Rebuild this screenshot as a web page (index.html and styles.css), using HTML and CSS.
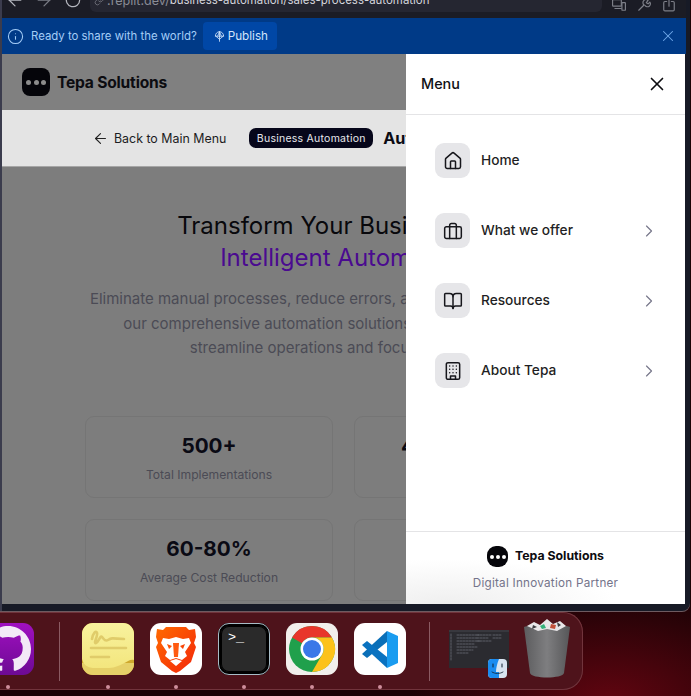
FILE: index.html
```html
<!DOCTYPE html>
<html lang="en">
<head>
  <meta charset="UTF-8" />
  <meta name="viewport" content="width=device-width, initial-scale=1.0"/>
  <title>Tepa Solutions - Sales Process Automation</title>
  <link rel="stylesheet" href="styles.css">
</head>
<body>
  <div class="window">
    <div class="toolbar">
      <div class="nav-btns">
        <svg class="tool-icon" viewBox="0 0 24 24"><path d="m12 19-7-7 7-7"/><path d="M19 12H5"/></svg>
        <svg class="tool-icon faded" viewBox="0 0 24 24"><path d="m12 5 7 7-7 7"/><path d="M5 12h14"/></svg>
        <svg class="tool-icon" viewBox="0 0 24 24"><path d="M20 12a8 8 0 1 1-3-6.2"/><path d="M20 3v5h-5"/></svg>
      </div>
      <div class="url-bar">
        <svg class="url-lock" viewBox="0 0 24 24"><path d="M10 13a5 5 0 0 0 7.500.500l3-3a5 5 0 0 0-7-7l-1.700 1.700"/><path d="M14 11a5 5 0 0 0-7.500-.500l-3 3a5 5 0 0 0 7 7l1.700-1.700"/></svg>
        <span class="url-host">.replit.dev/</span><span class="url-path">business-automation/sales-process-automation</span>
      </div>
      <div class="tool-right">
        <svg class="tool-icon" viewBox="0 0 24 24"><rect x="1" y="3" width="15" height="11" rx="1"/><path d="M5 18h11"/><rect x="17" y="8" width="6" height="13" rx="1"/></svg>
        <svg class="tool-icon" viewBox="0 0 24 24"><path d="M3 21l9-9"/><path d="M12 12a5 5 0 0 1 7-8l-3 4 3 2 3-3a5 5 0 0 1-8 6"/></svg>
        <svg class="tool-icon" viewBox="0 0 24 24"><path d="M8 6H5a2 2 0 0 0-2 2v12a2 2 0 0 0 2 2h14a2 2 0 0 0 2-2V8a2 2 0 0 0-2-2h-3"/><path d="M12 14V2"/></svg>
      </div>
    </div>

    <div class="banner">
      <svg class="banner-info" viewBox="0 0 24 24"><circle cx="12" cy="12" r="10"/><path d="M12 16v-4"/><path d="M12 8h.01"/></svg>
      <span class="banner-text">Ready to share with the world?</span>
      <button class="publish-btn">
        <svg class="publish-icon" viewBox="0 0 16 16"><path d="M2 7a6 6 0 0 1 12 0z"/><path d="M5.500 7 8 1l2.500 6"/><path d="M2 7l6 5 6-5"/><path d="M8 1v14"/></svg>
        Publish
      </button>
      <svg class="banner-close" viewBox="0 0 24 24"><path d="M18 6 6 18"/><path d="m6 6 12 12"/></svg>
    </div>

    <div class="page">
      <header class="site-header">
        <div class="logo"><i></i><i></i><i></i></div>
        <span class="brand">Tepa Solutions</span>
      </header>

      <div class="subnav">
        <svg class="back-icon" viewBox="0 0 24 24"><path d="m12 19-7-7 7-7"/><path d="M19 12H5"/></svg>
        <span class="back-text">Back to Main Menu</span>
        <span class="badge">Business Automation</span>
        <span class="subnav-title">Automation</span>
      </div>

      <main class="hero">
        <h1>Transform Your Business into<br><span class="accent">Intelligent Automation</span></h1>
        <p>Eliminate manual processes, reduce errors, and accelerate growth, with<br>our comprehensive automation solutions designed to help you<br>streamline operations and focus on growth.</p>
        <div class="stats">
          <div class="stat"><strong>500+</strong><span>Total Implementations</span></div>
          <div class="stat"><strong>400-600% ROI</strong><span>Average Return</span></div>
          <div class="stat"><strong>60-80%</strong><span>Average Cost Reduction</span></div>
          <div class="stat"><strong>24/7</strong><span>Process Monitoring</span></div>
        </div>
      </main>

      <aside class="drawer">
        <div class="drawer-head">
          <span class="drawer-title">Menu</span>
          <svg class="drawer-close" viewBox="0 0 24 24"><path d="M18 6 6 18"/><path d="m6 6 12 12"/></svg>
        </div>
        <nav class="drawer-nav">
          <a class="nav-item">
            <span class="nav-icon"><svg viewBox="0 0 24 24"><path d="M15 21v-8a1 1 0 0 0-1-1h-4a1 1 0 0 0-1 1v8"/><path d="M3 10a2 2 0 0 1 .709-1.528l7-5.999a2 2 0 0 1 2.582 0l7 5.999A2 2 0 0 1 21 10v9a2 2 0 0 1-2 2H5a2 2 0 0 1-2-2z"/></svg></span>
            <span class="nav-label">Home</span>
          </a>
          <a class="nav-item">
            <span class="nav-icon"><svg viewBox="0 0 24 24"><path d="M16 21V5a2 2 0 0 0-2-2h-4a2 2 0 0 0-2 2v16"/><rect x="2" y="7" width="20" height="14" rx="2"/></svg></span>
            <span class="nav-label">What we offer</span>
            <svg class="chevron" viewBox="0 0 24 24"><path d="m9 18 6-6-6-6"/></svg>
          </a>
          <a class="nav-item">
            <span class="nav-icon"><svg viewBox="0 0 24 24"><path d="M12 7v14"/><path d="M3 18a1 1 0 0 1-1-1V4a1 1 0 0 1 1-1h5a4 4 0 0 1 4 4 4 4 0 0 1 4-4h5a1 1 0 0 1 1 1v13a1 1 0 0 1-1 1h-6a3 3 0 0 0-3 3 3 3 0 0 0-3-3z"/></svg></span>
            <span class="nav-label">Resources</span>
            <svg class="chevron" viewBox="0 0 24 24"><path d="m9 18 6-6-6-6"/></svg>
          </a>
          <a class="nav-item">
            <span class="nav-icon"><svg viewBox="0 0 24 24"><rect x="4" y="2" width="16" height="20" rx="2"/><path d="M9 22v-4h6v4"/><path d="M8 6h.01M12 6h.01M16 6h.01M8 10h.01M12 10h.01M16 10h.01M8 14h.01M12 14h.01M16 14h.01"/></svg></span>
            <span class="nav-label">About Tepa</span>
            <svg class="chevron" viewBox="0 0 24 24"><path d="m9 18 6-6-6-6"/></svg>
          </a>
        </nav>
        <div class="drawer-foot">
          <div class="foot-brand">
            <div class="logo small"><i></i><i></i><i></i></div>
            <span class="foot-name">Tepa Solutions</span>
          </div>
          <div class="foot-sub">Digital Innovation Partner</div>
        </div>
      </aside>
    </div>
  </div>

  <div class="dock">
    <div class="dock-item">
      <svg class="app" viewBox="0 0 52 52">
        <defs><linearGradient id="gh" x1="0" y1="0" x2="0" y2="1"><stop offset="0" stop-color="#a010c0"/><stop offset="1" stop-color="#6d0a94"/></linearGradient></defs>
        <rect width="52" height="52" rx="11" fill="url(#gh)"/>
        <path transform="translate(3 3) scale(2.875)" fill="#f3e9f7" d="M8 0C3.580 0 0 3.580 0 8c0 3.540 2.290 6.530 5.470 7.590.4.070.550-.170.550-.380 0-.190-.010-.820-.010-1.490-2.010.370-2.530-.490-2.690-.940-.090-.230-.480-.940-.820-1.130-.280-.150-.680-.520-.010-.530.630-.010 1.080.580 1.230.820.720 1.210 1.870.870 2.330.660.070-.520.280-.870.510-1.070-1.780-.200-3.640-.890-3.640-3.950 0-.870.310-1.590.820-2.150-.080-.200-.360-1.020.080-2.120 0 0 .670-.210 2.200.820.640-.180 1.320-.270 2-.270.680 0 1.360.090 2 .270 1.530-1.040 2.200-.820 2.200-.820.440 1.100.160 1.920.080 2.120.510.560.820 1.270.820 2.150 0 3.070-1.870 3.750-3.650 3.950.290.250.540.730.540 1.480 0 1.070-.010 1.930-.010 2.200 0 .210.150.460.550.380A8.013 8.013 0 0 0 16 8c0-4.420-3.580-8-8-8z"/>
      </svg>
      <span class="dot"></span>
    </div>
    <span class="dock-sep first"></span>
    <div class="dock-item">
      <svg class="app" viewBox="0 0 52 52">
        <defs><linearGradient id="note" x1="0" y1="0" x2="0" y2="1"><stop offset="0" stop-color="#f8f29e"/><stop offset="1" stop-color="#f3e67e"/></linearGradient></defs>
        <rect width="52" height="52" rx="11" fill="#cfa92e"/>
        <path d="M0 40h52v1a11 11 0 0 1-11 11H11A11 11 0 0 1 0 41z" fill="#e6d068"/>
        <path d="M11 0h30a11 11 0 0 1 11 11v26c-6-2-11 7-25 8H11A11 11 0 0 1 0 36V11A11 11 0 0 1 11 0z" fill="url(#note)"/>
        <path d="M10 16c1-6 4-9 5-6s-4 11-1 10 4-8 6-6 3 5 6 3 3-2 16-1M9 25h35M9 34h18" fill="none" stroke="#e0cc6a" stroke-width="2.600" stroke-linecap="round"/>
      </svg>
      <span class="dot"></span>
    </div>
    <div class="dock-item">
      <svg class="app" viewBox="0 0 52 52">
        <defs><linearGradient id="lion" x1="0" y1="0" x2="1" y2="1"><stop offset="0" stop-color="#ff6a00"/><stop offset="1" stop-color="#f3260a"/></linearGradient></defs>
        <rect width="52" height="52" rx="11" fill="#fff"/>
        <path d="M16 4h20l3 3 6-1 1 8-2 6 2 4-5 15-11 9-4 2-4-2-11-9L6 24l2-4-2-6 1-8 6 1z" fill="url(#lion)"/>
        <path d="M13 15l6 1 7-2 7 2 6-1 2 5-6 9 2 4-5 4-6-2-6 2-5-4 2-4-6-9zM22 23l-5-2 2 5zM30 23l5-2-2 5zM26 36l-6 2 6 5 6-5z" fill="#fff" fill-rule="evenodd"/>
        <path d="M23 20h6l-1 14h-4z" fill="#ff5a10"/>
      </svg>
      <span class="dot"></span>
    </div>
    <div class="dock-item">
      <div class="app terminal"><span>&gt;_</span></div>
      <span class="dot"></span>
    </div>
    <div class="dock-item">
      <svg class="app" viewBox="0 0 52 52">
        <rect width="52" height="52" rx="11" fill="#f1efec"/>
        <circle cx="26" cy="26" r="23" fill="#20a04c"/>
        <path d="M26 3a23 23 0 0 1 20 11.500H26a11.500 11.500 0 0 0-10 5.750L6 14.500A23 23 0 0 1 26 3z" fill="#e8362b"/>
        <path d="M46 14.500A23 23 0 0 1 26 49l10-17.250a11.500 11.500 0 0 0-10-17.250z" fill="#fcc21a"/>
        <circle cx="26" cy="26" r="11.500" fill="#fff"/>
        <circle cx="26" cy="26" r="9" fill="#3a78e8"/>
      </svg>
      <span class="dot"></span>
    </div>
    <div class="dock-item">
      <svg class="app" viewBox="0 0 52 52">
        <rect width="52" height="52" rx="11" fill="#fff"/>
        <path d="M8 31 33 8v11L13 35z" fill="#0a6fb8"/>
        <path d="M8 22l5-4 20 16v11z" fill="#0a72c0"/>
        <path d="M33 8l11 5v27l-11 5z" fill="#1a9cf0"/>
      </svg>
      <span class="dot"></span>
    </div>
    <span class="dock-sep second"></span>
    <svg class="stack" viewBox="0 0 60 48">
      <rect width="60" height="38" fill="#2b2b30"/>
      <rect width="60" height="2" fill="#38383e"/>
      <path d="M2 4v26M8 5h22M8 8h20M8 11h24M8 14h18M8 17h20M8 20h16M8 23h12M28 5h14M28 8h12M28 11h14M44 5h8M44 8h8" stroke="#5c5e66" stroke-width="1" stroke-dasharray="2 1"/>
      <rect x="39" y="29" width="19" height="19" rx="4" fill="#d8e4f0"/>
      <path d="M43 29h7c-2 5-3 9-3 13h3v6h-7a4 4 0 0 1-4-4V33a4 4 0 0 1 4-4z" fill="#1a8cf0"/>
      <path d="M44 34v3M53 34v3" stroke="#123" stroke-width="1"/>
      <path d="M43 42c3 2 8 2 11 0" stroke="#123" stroke-width=".8"/>
    </svg>
    <svg class="trash" viewBox="0 0 46 60">
      <defs><linearGradient id="can" x1="0" y1="0" x2="1" y2="0"><stop offset="0" stop-color="#5c5c5e"/><stop offset=".5" stop-color="#7e7e80"/><stop offset="1" stop-color="#565658"/></linearGradient></defs>
      <path d="M0 9c6-3 40-3 46 0l-6 46c-1 6-33 6-34 0z" fill="url(#can)"/>
      <path d="M3 8l7-4 6 3 7-6 6 5 7-3 6 5-9 5-10-2-9 2z" fill="#e8e6e8"/>
      <path d="M16 8l4-2 2 4-4 1z" fill="#35b07a"/>
      <path d="M27 6l5 1-1 4-5-1z" fill="#c2503a"/>
      <path d="M9 7l4 2-5 2zM33 4l4 3-3 2z" fill="#3e3e42"/>
    </svg>
  </div>
</body>
</html>
```

FILE: styles.css
```css
* {
  box-sizing: border-box;
}

body {
  margin: 0;
  width: 691px;
  height: 696px;
  overflow: hidden;
  font-family: Inter, 'Noto Sans', sans-serif;
  background: radial-gradient(ellipse 200px 110px at 610px 700px, #600510, #2c0308 75%, #1c0205);
}

svg {
  display: block;
  fill: none;
  stroke: currentColor;
  stroke-width: 2;
  stroke-linecap: round;
  stroke-linejoin: round;
}

/* browser window */
.window {
  display: flex;
  flex-direction: column;
  width: 690px;
  height: 611px;
  padding: 0 4px 7px 0;
  background-color: #171a26;
  border-left: 2px solid #3b3c4d;
  border-radius: 0 0 8px 0;
  box-shadow: 0 1px 0 #6e5a60;
}

.toolbar {
  display: flex;
  align-items: flex-end;
  flex: 0 0 18px;
  padding-bottom: 6px;
  overflow: hidden;
  background-color: #1b1c25;
  color: #a9abb4;
}

.nav-btns {
  display: flex;
  align-items: center;
  gap: 9px;
  width: 88px;
  height: 24px;
  padding-left: 3px;
}

.tool-icon {
  width: 14px;
  height: 14px;
}

.nav-btns .tool-icon {
  width: 20px;
  height: 20px;
  stroke-width: 1.5;
  color: #b4b6be;
}

.nav-btns .faded {
  color: #7a7c85;
}

.url-bar {
  display: flex;
  align-items: center;
  width: 512px;
  height: 24px;
  padding-left: 4px;
  background-color: #252631;
  border-radius: 6px;
  white-space: nowrap;
}

.url-lock {
  width: 11px;
  height: 11px;
  margin-right: 2px;
  color: #6d6f78;
}

.url-host {
  font-size: 12.6px;
  color: #8a8c96;
}

.url-path {
  font-size: 11.45px;
  color: #d6d7dd;
}

.tool-right {
  display: flex;
  align-items: flex-end;
  gap: 11px;
  height: 14px;
  padding-left: 10px;
  color: #7d7f88;
}

/* publish banner */
.banner {
  display: flex;
  align-items: center;
  flex: 0 0 36px;
  padding-left: 5px;
  background-color: #003a87;
}

.banner-info {
  width: 17px;
  height: 17px;
  stroke-width: 1.5;
  color: #a4cdf7;
}

.banner-text {
  margin-left: 7px;
  font-size: 11.4px;
  color: #a4cdf7;
}

.publish-btn {
  display: flex;
  align-items: center;
  gap: 3px;
  height: 28px;
  margin-left: 6px;
  padding: 0 9px 0 11px;
  border: none;
  border-radius: 4px;
  background-color: #0047a6;
  color: #d3e5fb;
  font-family: inherit;
  font-size: 11.7px;
}

.publish-icon {
  width: 11px;
  height: 13px;
  stroke-width: 1.2;
}

.banner-close {
  width: 18px;
  height: 18px;
  margin-left: auto;
  margin-right: 9px;
  stroke-width: 1.4;
  color: #6fa8ea;
}

/* page under the drawer */
.page {
  position: relative;
  flex: 1;
  margin-right: 1px;
  overflow: hidden;
  background-color: #7d7d7d;
}

.site-header {
  display: flex;
  align-items: center;
  gap: 7px;
  height: 56px;
  padding-left: 20px;
  background-color: #808080;
}

.logo {
  display: flex;
  align-items: center;
  justify-content: center;
  gap: 2.5px;
  width: 28px;
  height: 28px;
  border-radius: 8px;
  background-color: #05050a;
}

.logo i {
  width: 5px;
  height: 5px;
  border-radius: 50%;
  background-color: #8c8c8c;
}

.logo.small {
  width: 21px;
  height: 21px;
  border-radius: 9px;
  gap: 2px;
}

.logo.small i {
  width: 4px;
  height: 4px;
  background-color: #fff;
}

.brand {
  font-size: 15.6px;
  font-weight: 700;
  letter-spacing: -0.2px;
  color: #0c0c10;
}

.subnav {
  display: flex;
  align-items: center;
  height: 57px;
  padding-left: 90px;
  background-color: #e4e4e4;
  border-bottom: 1px solid #a6a6a6;
  white-space: nowrap;
}

.back-icon {
  width: 17px;
  height: 17px;
  stroke-width: 1.6;
  color: #222;
}

.back-text {
  margin-left: 5px;
  font-size: 12.4px;
  color: #1c1c22;
}

.badge {
  margin-left: 23px;
  padding: 4px 7.5px 2px;
  border-radius: 7px;
  background-color: #06061a;
  color: #e8e8ec;
  font-size: 10.5px;
  line-height: 14px;
  letter-spacing: 0.25px;
}

.subnav-title {
  margin-left: 10px;
  font-size: 16.2px;
  font-weight: 700;
  color: #0a0a12;
}

.hero {
  padding-top: 43px;
  text-align: center;
  white-space: nowrap;
}

.hero h1 {
  margin: 0;
  font-size: 24px;
  font-weight: 400;
  line-height: 32px;
  color: #08080c;
}

.accent {
  color: #4a0a90;
}

.hero p {
  margin: 13px 0 0;
  font-size: 15px;
  line-height: 24.5px;
  color: #4b4b55;
}

.stats {
  display: grid;
  grid-template-columns: 248px 248px;
  gap: 21px;
  justify-content: center;
  margin-top: 55px;
}

.stat {
  display: flex;
  flex-direction: column;
  align-items: center;
  height: 82px;
  padding-top: 15px;
  border: 1px solid #757575;
  border-radius: 9px;
}

.stat strong {
  font-size: 20.7px;
  line-height: 28px;
  font-weight: 700;
  color: #0a0a14;
}

.stat span {
  margin-top: 7px;
  font-size: 12.15px;
  line-height: 16px;
  color: #4b4b55;
}

/* slide-in menu */
.drawer {
  position: absolute;
  top: 0;
  right: 0;
  bottom: 0;
  display: flex;
  flex-direction: column;
  width: 279px;
  background: radial-gradient(ellipse 170px 45px at 40px 100%, #efefef, #fff);
}

.drawer-head {
  display: flex;
  align-items: center;
  justify-content: space-between;
  height: 61px;
  padding: 0 17px 0 15px;
  border-bottom: 1px solid #e4e4e6;
}

.drawer-title {
  padding-bottom: 2px;
  font-size: 14.4px;
  font-weight: 500;
  color: #101014;
}

.drawer-close {
  width: 22px;
  height: 22px;
  stroke-width: 1.8;
  color: #0c0c10;
}

.drawer-nav {
  display: flex;
  flex-direction: column;
  gap: 35px;
  padding: 28px 26px 0 29px;
}

.nav-item {
  display: flex;
  align-items: center;
  height: 35px;
}

.nav-icon {
  display: flex;
  align-items: center;
  justify-content: center;
  width: 35px;
  height: 35px;
  border-radius: 9px;
  background-color: #e6e6e9;
  color: #17171c;
}

.nav-icon svg {
  width: 20px;
  height: 20px;
  stroke-width: 1.8;
}

.nav-label {
  margin-left: 11px;
  padding-bottom: 2px;
  font-size: 13.7px;
  font-weight: 500;
  color: #1f1f24;
}

.chevron {
  width: 20px;
  height: 20px;
  margin-left: auto;
  stroke-width: 1.4;
  color: #77778a;
}

.drawer-foot {
  display: flex;
  flex-direction: column;
  align-items: center;
  height: 73px;
  margin-top: auto;
  padding-top: 14px;
  border-top: 1px solid #e4e4e6;
}

.foot-brand {
  display: flex;
  align-items: center;
  gap: 7px;
  font-size: 12.3px;
  font-weight: 700;
  color: #0c0c10;
}

.foot-name {
  padding-bottom: 2px;
}

.foot-sub {
  margin-top: 9px;
  font-size: 11.7px;
  letter-spacing: 0.25px;
  color: #74748a;
}

/* dock */
.dock {
  display: flex;
  align-items: flex-start;
  gap: 16px;
  width: 623px;
  height: 78px;
  margin: 1px 0 0 -40px;
  padding: 11px 13px 0 22px;
  background-color: #4e131b;
  border-radius: 20px;
  box-shadow: inset 0 0 0 1px #71343c;
}

.dock-item {
  display: flex;
  flex-direction: column;
  align-items: center;
  width: 52px;
}

.app {
  width: 52px;
  height: 52px;
  stroke: none;
}

.dot {
  width: 4px;
  height: 4px;
  margin-top: 10px;
  border-radius: 50%;
  background-color: #cf8f9c;
}

.dock-sep {
  width: 1px;
  height: 59px;
  margin-top: -1px;
  background-color: #8a5a62;
}

.dock-sep.first {
  margin-left: 9px;
  margin-right: 6px;
}

.dock-sep.second {
  margin-left: 7px;
  margin-right: 3px;
}

.terminal {
  padding: 5px 0 0 7px;
  border: 3px solid #000;
  border-radius: 11px;
  outline: 1px solid #a8bcc6;
  outline-offset: -1px;
  background-color: #2a2a2a;
  box-shadow: inset 0 0 0 1px #000;
  color: #fff;
  font-family: 'Liberation Mono', monospace;
  font-size: 13.5px;
  line-height: 13px;
}

.stack {
  flex: 0 0 60px;
  height: 48px;
  margin-top: 7px;
  stroke: none;
}

.trash {
  flex: 0 0 46px;
  height: 60px;
  margin: -5px 0 0 -1px;
  stroke: none;
}
```
